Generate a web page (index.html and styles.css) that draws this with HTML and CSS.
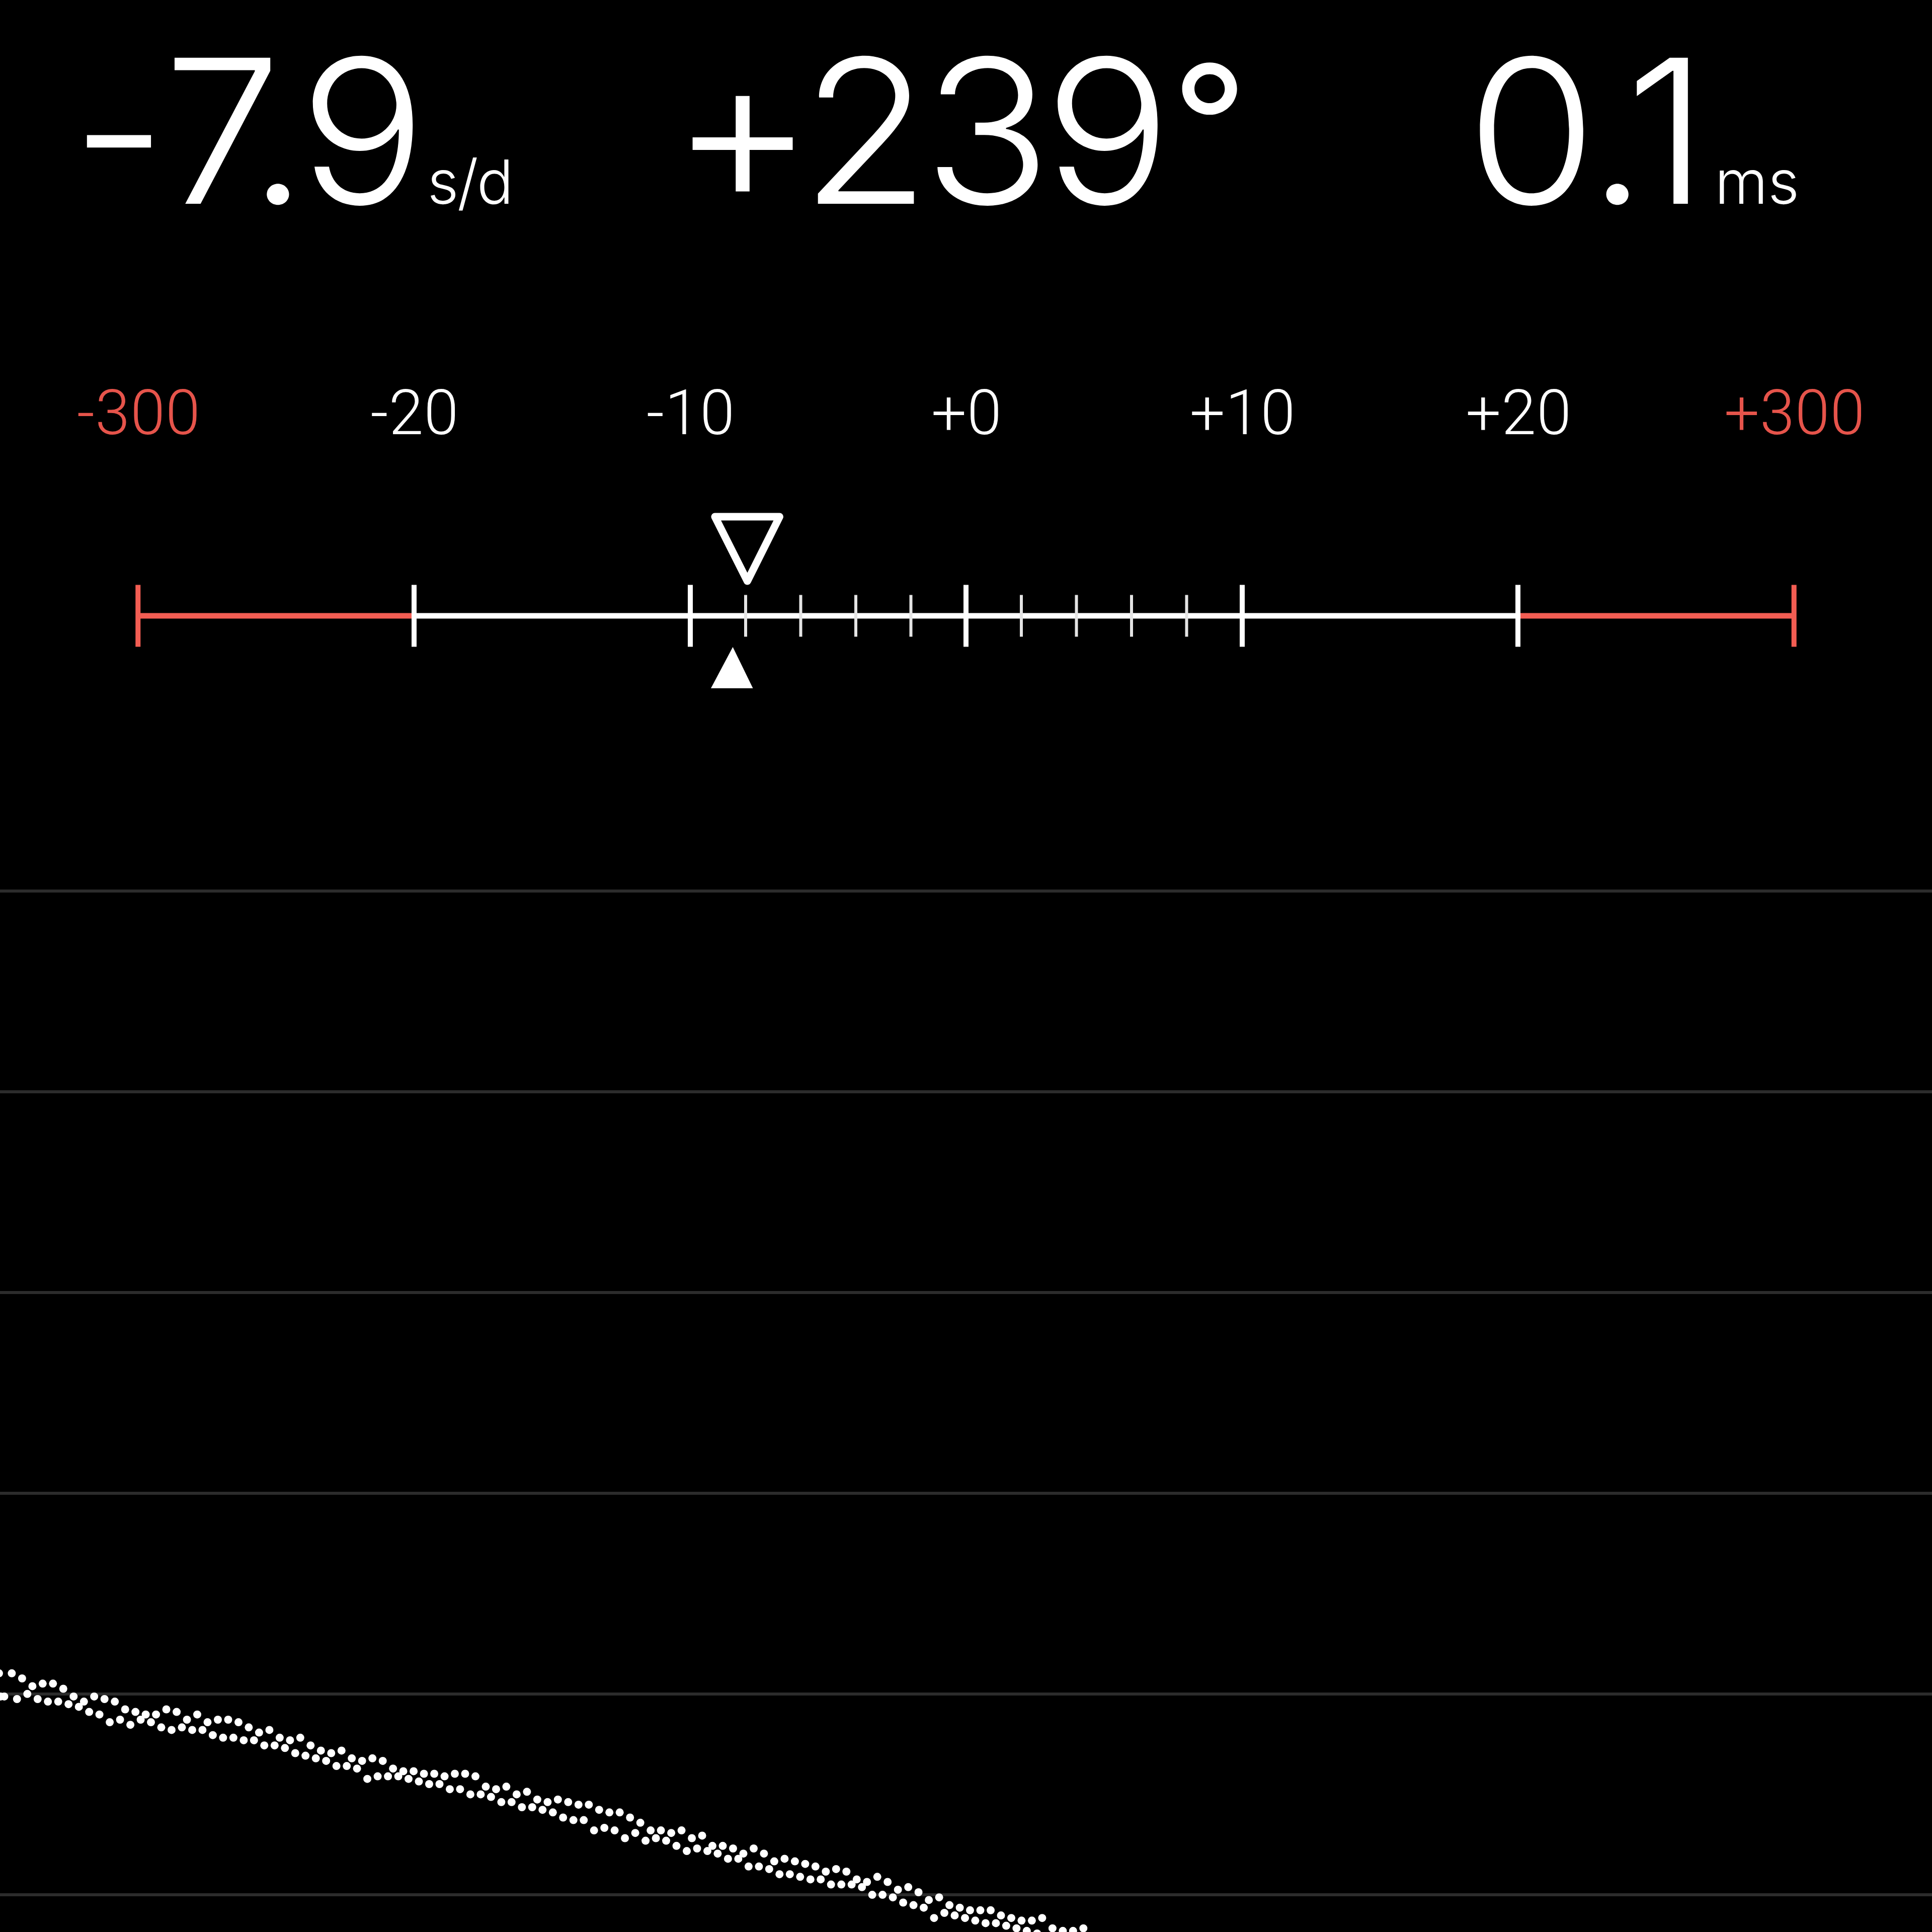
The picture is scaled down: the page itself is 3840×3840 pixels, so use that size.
FILE: index.html
```
<!DOCTYPE html>
<html lang="en">
<head>
    <meta charset="UTF-8">
    <meta name="viewport" content="width=device-width, initial-scale=1.0">
    <title>Timegrapher</title>
    <link rel="stylesheet" href="styles.css">
</head>
<body>
    <div class="readouts">
        <div class="readout rate"><span class="value"><span class="sign">-</span>7.9</span><span class="unit">s/d</span></div>
        <div class="readout amplitude"><span class="value"><span class="sign">+</span>239<span class="degree">°</span></span></div>
        <div class="readout beat"><span class="value">0.1</span><span class="unit">ms</span></div>
    </div>

    <div class="labels">
        <span class="limit">-300</span>
        <span>-20</span>
        <span>-10</span>
        <span>+0</span>
        <span>+10</span>
        <span>+20</span>
        <span class="limit">+300</span>
    </div>

    <svg class="scale" viewBox="0 980 3840 420">
        <g class="limit-line">
            <path d="M274 1224H823M3017 1224H3566" stroke-width="11"/>
            <path d="M274.3 1162.5v123M3565.7 1162.5v123" stroke-width="10"/>
        </g>
        <g class="main-line">
            <path d="M823 1224H3017" stroke-width="11"/>
            <path d="M823 1162.5v123M1372 1162.5v123M1920 1162.5v123M2469 1162.5v123M3017 1162.5v123" stroke-width="10"/>
            <path class="minor" d="M1482 1182.5v83M1591.5 1182.5v83M1701 1182.5v83M1810.5 1182.5v83M2030 1182.5v83M2139.5 1182.5v83M2249 1182.5v83M2358.5 1182.5v83"/>
            <path class="average" d="M1421 1027L1549.500 1027L1485.500 1155Z"/>
        </g>
        <path class="current" d="M1456.500 1286L1496.500 1368H1413Z"/>
    </svg>

    <div class="chart">
        <div class="row"></div>
        <div class="row"></div>
        <div class="row"></div>
        <div class="row"></div>
        <div class="row"></div>
        <div class="row"></div>
        <svg id="trace" class="trace" viewBox="0 3240 3840 600"></svg>
    </div>

    <script src="trace.js"></script>
</body>
</html>
```
FILE: styles.css
```
body {
    margin: 0;
    height: 3840px;
    overflow: hidden;
    background: #000;
    color: #fff;
    display: flex;
    flex-direction: column;
}
.readouts {
    height: 700px;
    display: grid;
    grid-template-columns: 1190px 1452px 1198px;
    font-family: Inter, sans-serif;
    font-weight: 300;
    /* keep + and - on the text axis */
    font-feature-settings: "calt" 0;
}
.readout {
    display: flex;
    justify-content: center;
    align-items: baseline;
    white-space: nowrap;
    line-height: 520px;
}
.rate {
    padding-right: 14px;
}
.amplitude {
    padding-right: 34px;
}
.beat {
    padding-left: 20px;
}
.value {
    font-size: 399px;
    letter-spacing: -13px;
    transform: scaleX(1.05);
}
.beat .value {
    letter-spacing: -7px;
}
.rate .sign {
    letter-spacing: -6px;
}
.amplitude .sign {
    font-size: 420px;
    line-height: 0;
    letter-spacing: -27px;
}
.degree {
    font-size: 316px;
    font-weight: 400;
    line-height: 0;
    vertical-align: 49px;
    margin-left: 14px;
}
.unit {
    font-size: 121px;
    margin-left: 32px;
}
.rate .unit {
    letter-spacing: -3px;
}
.labels {
    height: 280px;
    display: grid;
    grid-template-columns: repeat(7, 1fr);
    font: 300 124px/242px Roboto, sans-serif;
    letter-spacing: 1px;
    text-indent: 3px;
    text-align: center;
}
.limit {
    color: #e6544b;
}
.scale {
    display: block;
    width: 3840px;
    height: 420px;
    fill: none;
}
.limit-line {
    stroke: #f35d53;
}
.main-line {
    stroke: #fff;
}
.minor {
    stroke: #e4e4e4;
    stroke-width: 6;
}
.average {
    stroke-width: 15;
    stroke-linejoin: round;
}
.current {
    fill: #fff;
}
.chart {
    position: relative;
    height: 2440px;
    padding-top: 368px;
    box-sizing: border-box;
    overflow: hidden;
}
.row {
    height: 399px;
    box-sizing: border-box;
    border-top: 6px solid #2c2c2c;
}
.trace {
    position: absolute;
    left: 0;
    bottom: 0;
    width: 3840px;
    height: 600px;
    fill: #fff;
}
```
FILE: trace.js
```
// beat offsets, one entry per tick / tock
const tick = [
    0, 2, 5, 4, 4, 6, 9, 11, 9, 10, 11, 14, 15, 16, 16, 14, 15, 18, 16, 19,
    18, 18, 19, 21, 23, 22, 25, 26, 25, 28, 30, 31, 30, 33, 34, 33, 34, 37, 38, 38,
    39, 39, 40, 39, 39, 40, 44, 45, 44, 47, 46, 49, 50, 49, 50, 51, 51, 53, 54, 54,
    56, 58, 61, 61, 62, 61, 64, 63, 67, 67, 68, 70, 68, 70, 73, 72, 73, 74, 75, 77,
    76, 77, 80, 81, 79, 81, 84, 83, 85, 88, 87, 90, 91, 92, 92, 92, 94, 95, 96, 96,
    95, 99, 100, 100, 99
];
const tock = [
    10, 8, 10, 11, 11, 12, 13, 15, 16, 19, 18, 20, 18, 19, 21, 22, 21, 22, 22, 24,
    25, 25, 26, 26, 28, 28, 29, 31, 32, 33, 34, 36, 36, 37, 41, 40, 40, 40, 41, 42,
    43, 43, 45, 45, 47, 47, 48, 50, 50, 52, 52, 53, 54, 56, 57, 57, 61, 60, 61, 64,
    62, 65, 64, 65, 67, 69, 68, 69, 70, 72, 72, 75, 75, 76, 78, 78, 79, 80, 80, 82,
    82, 82, 83, 86, 86, 87, 89, 90, 91, 95, 93, 94, 95, 96, 97, 97, 98, 99, 100, 101
];

const trace = document.getElementById("trace");

function dot(x, k) {
    const c = document.createElementNS("http://www.w3.org/2000/svg", "circle");
    c.setAttribute("cx", x.toFixed(1));
    c.setAttribute("cy", (3325.8 + k * 5.12).toFixed(1));
    c.setAttribute("r", 8);
    trace.appendChild(c);
}

dot(-2, 0);
dot(1, 9);
dot(8.5, 9);
tick.forEach((k, i) => dot(23.4 + i * 20.48, k));
tock.forEach((k, i) => dot(33.8 + i * 20.48, k));
```
